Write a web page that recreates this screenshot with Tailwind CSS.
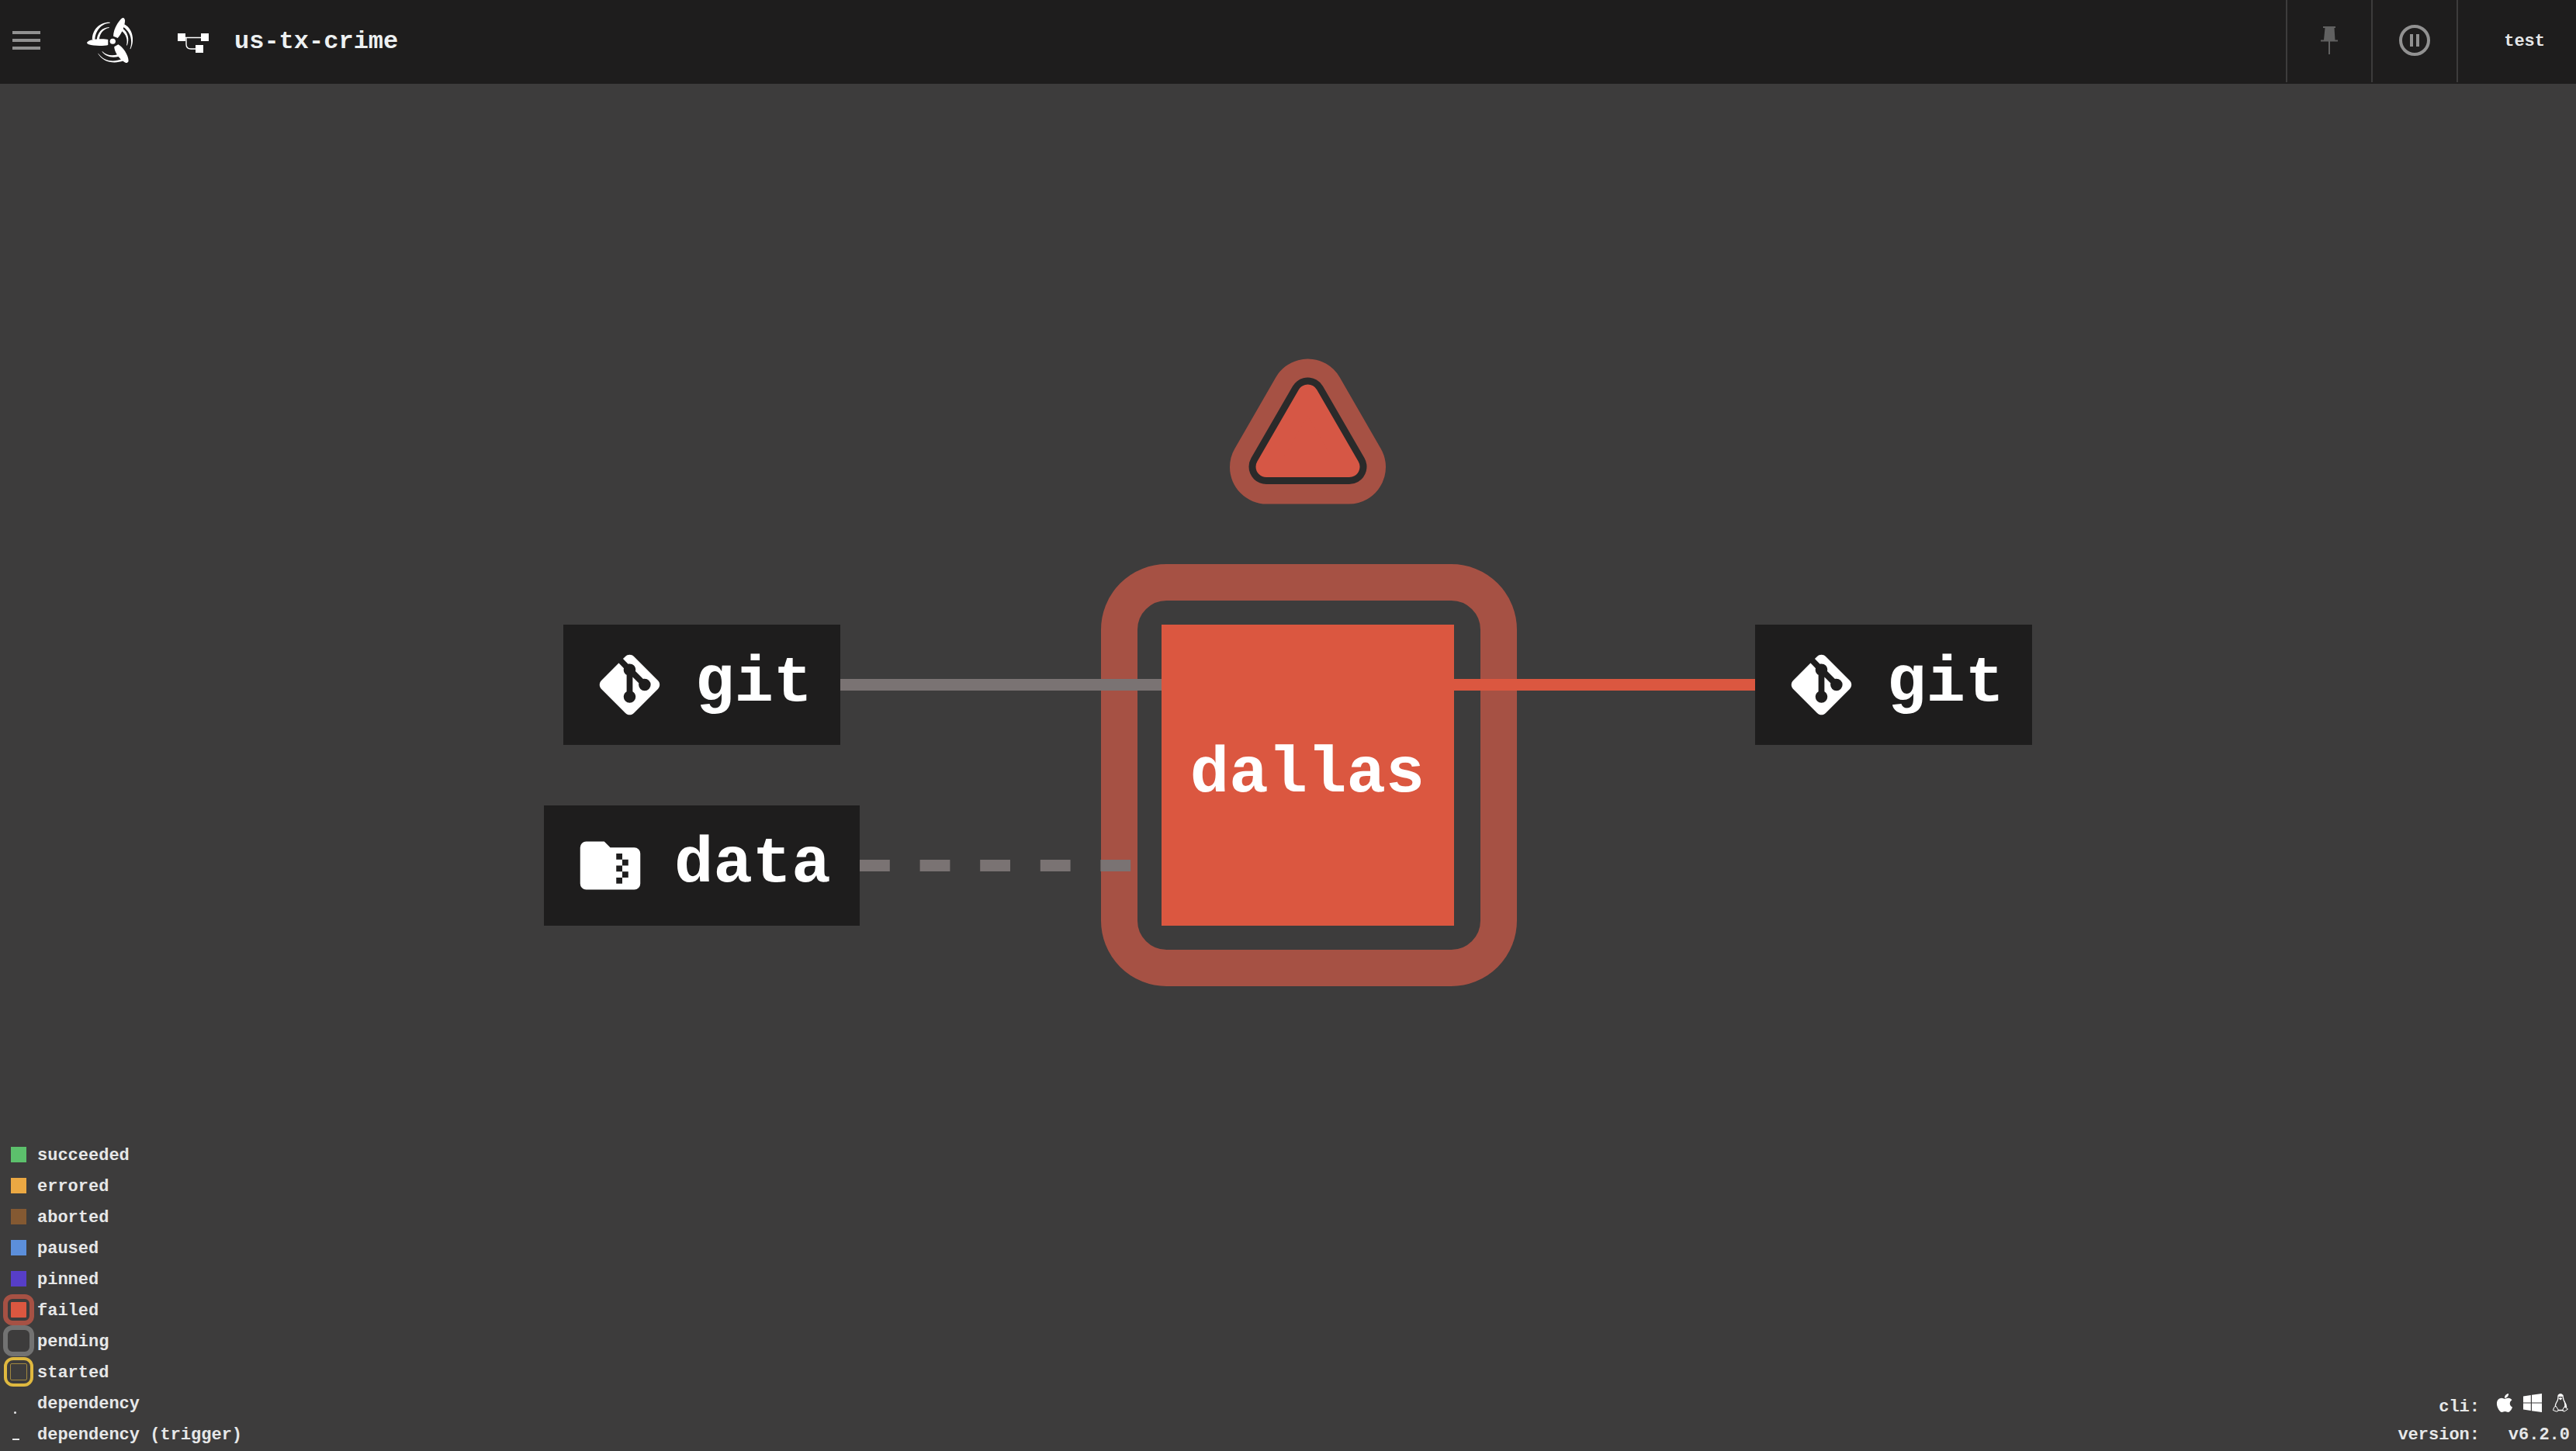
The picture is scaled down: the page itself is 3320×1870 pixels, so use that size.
<!DOCTYPE html>
<html lang="en">
<head>
<meta charset="utf-8">
<title>us-tx-crime</title>
<script src="https://cdn.jsdelivr.net/npm/@tailwindcss/browser@4"></script>
</head>
<body class="flex h-screen flex-col overflow-hidden bg-[#3d3c3c] font-['Liberation_Mono',monospace] text-[22px] font-bold text-[#e6e7e8]">
<header class="flex h-[108px] shrink-0 items-start bg-[#1e1d1d]">
  <div class="flex h-[106px] grow items-center pb-0.5 pl-4">
    <button type="button" aria-label="Menu" class="flex w-9 flex-col gap-1.5">
      <span class="h-1 w-full bg-[#919191]"></span>
      <span class="h-1 w-full bg-[#919191]"></span>
      <span class="h-1 w-full bg-[#919191]"></span>
    </button>
    <a href="#" aria-label="Home" class="ml-[60px]">
      <svg class="h-[58px] w-[59px]" viewBox="325 67 171 174" preserveAspectRatio="none" fill="#fff">
        <circle cx="421.500" cy="158" r="10.500"/>
        <path d="M404 151V172C392 176 350 177 332 170Q318 163 332 156C350 148 390 147 404 151Z"/>
        <path d="M424 138L440 145C454 131 469 93 467 75Q463 60 451 73C434 92 423 120 424 138Z"/>
        <path d="M427 179L442 170C460 179 483 216 480 236Q474 247 461 235C442 222 428 198 427 179Z"/>
        <path d="M345 152C344 112 374 82 411 84V87C380 88 356 116 355 152Z"/>
        <path d="M362 152C364 124 382 104 408 103V106C387 109 372 128 371 152Z"/>
        <path d="M465 92C495 108 505 152 488 188L486 187C497 155 488 121 461 102Z"/>
        <path d="M459 108C478 122 485 150 475 174L473 173C478 152 472 131 455 118Z"/>
        <path d="M366 204C385 240 428 246 461 233L456 226C425 239 390 236 368 205Z"/>
        <path d="M381 197C394 218 420 223 445 216L441 208C420 215 398 213 383 197Z"/>
      </svg>
    </a>
    <svg class="ml-[58px] mt-2 h-[26px] w-[41px]" viewBox="0 0 41 26" fill="#fff">
      <path d="M0 0h10v10H0zM30 0h10v10H30zM23 15h10v10H23z"/>
      <path d="M10 5.500H30M11 6V14Q11 20 17 20H23" fill="none" stroke="#fff" stroke-width="1.400"/>
    </svg>
    <a href="#" class="ml-8 pt-1 text-[32px] text-[#edf0f1]">us-tx-crime</a>
  </div>
  <button type="button" aria-label="Pin" class="flex h-[106px] w-[110px] items-center justify-center border-l-2 border-[#3d3c3c] pb-0.5">
    <svg class="h-9 w-[22px]" viewBox="0 0 22 36" fill="#616161"><path d="M3 0h16v2h-1.500l1 15.500H22v2H12V36h-2V19.500H0v-2h4L5.500 2H3z"/></svg>
  </button>
  <button type="button" aria-label="Pause" class="flex h-[106px] w-[110px] items-center justify-center border-l-2 border-[#3d3c3c] pb-0.5">
    <svg class="size-10" viewBox="0 0 40 40" fill="#919191"><circle cx="20" cy="20" r="18" fill="none" stroke="#919191" stroke-width="4"/><path d="M14 12h4v16h-4zM22 12h4v16h-4z"/></svg>
  </button>
  <button type="button" class="flex h-[106px] w-[154px] items-center justify-end border-l-2 border-[#3d3c3c] pr-10">test</button>
</header>

<main class="relative min-h-0 grow">
  <svg class="absolute inset-0 size-full" viewBox="0 108 3320 1762" role="img" aria-label="Pipeline graph" fill="#fff" font-size="84">
    <!-- failed ring -->
    <rect x="1442.500" y="750.500" width="489" height="497" rx="61" fill="none" stroke="#a65144" stroke-width="47"/>
    <!-- edges -->
    <path d="M1083 882.500H1497" stroke="#7a7373" stroke-width="15"/>
    <path d="M1108 1115.500H1490" stroke="#7a7373" stroke-width="15" stroke-dasharray="38.800"/>
    <path d="M1874 882.500H2262" stroke="#db5740" stroke-width="15"/>
    <!-- failure marker -->
    <g stroke-linejoin="round">
      <path d="M1685.500 510L1738.500 602H1632.500Z" fill="#a65144" stroke="#a65144" stroke-width="95"/>
      <path d="M1685.500 509L1739 601.500H1632Z" fill="#2a2a2a" stroke="#2a2a2a" stroke-width="45"/>
      <path d="M1685.500 509L1739 601.500H1632Z" fill="#d65745" stroke="#d65745" stroke-width="27"/>
    </g>
    <a href="#dallas">
      <rect x="1497" y="805" width="377" height="388" fill="#db5740"/>
      <text x="1685" y="1020" text-anchor="middle">dallas</text>
    </a>
    <a href="#git-in">
      <rect x="726" y="805" width="357" height="155" fill="#1e1d1d"/>
      <svg x="765" y="836" width="93" height="93" viewBox="0 0 24 24"><path id="git" d="M2.600,10.590L8.380,4.800L10.070,6.500C9.830,7.350 10.220,8.280 11,8.730V14.270C10.400,14.610 10,15.260 10,16A2,2 0 0,0 12,18A2,2 0 0,0 14,16C14,15.260 13.600,14.610 13,14.270V9.410L15.070,11.500C15,11.650 15,11.820 15,12A2,2 0 0,0 17,14A2,2 0 0,0 19,12A2,2 0 0,0 17,10C16.820,10 16.650,10 16.500,10.070L13.930,7.500C14.190,6.570 13.710,5.550 12.780,5.160C12.350,5 11.900,4.960 11.500,5.070L9.800,3.380L10.590,2.600C11.370,1.810 12.630,1.810 13.410,2.600L21.400,10.590C22.190,11.370 22.190,12.630 21.400,13.410L13.410,21.400C12.630,22.190 11.370,22.190 10.590,21.400L2.600,13.410C1.810,12.630 1.810,11.370 2.600,10.590Z"/></svg>
      <text x="896" y="903">git</text>
    </a>
    <a href="#data">
      <rect x="701" y="1038" width="407" height="155" fill="#1e1d1d"/>
      <svg x="740" y="1069" width="93" height="93" viewBox="0 0 24 24"><path d="M20 6h-8l-2-2H4a2 2 0 0 0-2 2v12a2 2 0 0 0 2 2h16a2 2 0 0 0 2-2V8a2 2 0 0 0-2-2z"/><path d="M14 8h2v2h-2zM16 10h2v2h-2zM14 12h2v2h-2zM16 14h2v2h-2zM14 16h2v2h-2z" fill="#1e1d1d"/></svg>
      <text x="869" y="1136">data</text>
    </a>
    <a href="#git-out">
      <rect x="2262" y="805" width="357" height="155" fill="#1e1d1d"/>
      <svg x="2301" y="836" width="93" height="93" viewBox="0 0 24 24"><use href="#git"/></svg>
      <text x="2432" y="903">git</text>
    </a>
  </svg>

  <dl class="absolute bottom-0.5 left-1 grid grid-cols-[40px_auto] items-center gap-x-1 leading-9">
    <dt class="flex h-10 items-center justify-center"><span class="size-5 bg-[#5cc06c]"></span></dt><dd class="pt-1">succeeded</dd>
    <dt class="flex h-10 items-center justify-center"><span class="size-5 bg-[#eba843]"></span></dt><dd class="pt-1">errored</dd>
    <dt class="flex h-10 items-center justify-center"><span class="size-5 bg-[#845932]"></span></dt><dd class="pt-1">aborted</dd>
    <dt class="flex h-10 items-center justify-center"><span class="size-5 bg-[#5c8fdb]"></span></dt><dd class="pt-1">paused</dd>
    <dt class="flex h-10 items-center justify-center"><span class="size-5 bg-[#573ec8]"></span></dt><dd class="pt-1">pinned</dd>
    <dt class="flex h-10 items-center justify-center rounded-xl border-[6px] border-[#a65144]"><span class="size-5 rounded-[1px] bg-[#db5740]"></span></dt><dd class="pt-1">failed</dd>
    <dt class="h-10 rounded-xl border-[6px] border-[#727272]"></dt><dd class="pt-1">pending</dd>
    <dt class="flex h-10 items-center justify-center"><span class="flex size-[38px] items-center justify-center rounded-xl border-4 border-[#dfb83f]"><span class="size-[22px] rounded-xs border border-[#a0873f]"></span></span></dt><dd class="pt-1">started</dd>
    <dt class="flex h-10 items-end pb-1.5 pl-3.5"><span class="size-[3px] rounded-full bg-[#e6e7e8]"></span></dt><dd class="pt-1">dependency</dd>
    <dt class="flex h-10 items-end pb-3 pl-3"><span class="h-0.5 w-[9px] bg-[#e6e7e8]"></span></dt><dd class="pt-1">dependency (trigger)</dd>
  </dl>

  <dl class="absolute right-2 bottom-0.5 grid grid-cols-[auto_auto] items-center gap-x-5 text-right leading-9">
    <dt>cli:</dt>
    <dd class="flex h-9 items-start justify-end gap-3">
      <a href="#" aria-label="Apple"><svg class="size-6" viewBox="-32 32 448 448" fill="#fff"><path d="M318.700 268.700c-.2-36.700 16.400-64.400 50-84.800-18.800-26.900-47.200-41.700-84.700-44.600-35.500-2.800-74.300 20.700-88.500 20.700-15 0-49.400-19.700-76.400-19.700C63.300 141.200 4 184.800 4 273.500q0 39.300 14.400 81.200c12.800 36.700 59 126.700 107.200 125.200 25.200-.6 43-17.900 75.800-17.900 31.800 0 48.300 17.900 76.400 17.900 48.600-.7 90.400-82.500 102.600-119.300-65.200-30.700-61.700-90-61.700-91.900zm-56.600-164.200c27.300-32.400 24.800-61.900 24-72.500-24.100 1.400-52 16.400-67.900 34.900-17.500 19.800-27.800 44.300-25.600 71.900 26.100 2 49.900-11.400 69.500-34.300z"/></svg></a>
      <a href="#" aria-label="Windows"><svg class="size-6" viewBox="0 0 24 24" fill="#fff"><path d="M0 3.400L9.800 2V11.500H0zM11 1.800L24 0V11.500H11zM0 12.500H9.800V22L0 20.600zM11 12.500H24V24L11 22.200z"/></svg></a>
      <a href="#" aria-label="Linux"><svg class="size-6" viewBox="0 0 24 24" fill="none" stroke="#fff"><path d="M9 2.500Q12-1 15 2.500C15.500 6 15.300 8 17.500 11Q20 15 19.500 18M9 2.500C9 7 9 8 6.500 12Q5 15 5.500 17M8.500 21.500H15.500" stroke-width="1.300"/><path d="M9.500 6L12 5L14.500 6L12 8.500ZM9 2.500Q12-.5 15 2.500L14.500 4H9.500ZM15 7L17.500 11Q20 15 19.500 18L17 17Q18 12 15 7Z" fill="#fff" stroke="none"/><path d="M6 16L9.500 21.500Q8 24 6 22.800L2.500 21.500Q3 17 6 16ZM17 17L21.500 20Q18 22.500 17 23Q14.500 23.500 15 20.500Z"/></svg></a>
    </dd>
    <dt>version:</dt>
    <dd>v6.2.0</dd>
  </dl>
</main>
</body>
</html>
